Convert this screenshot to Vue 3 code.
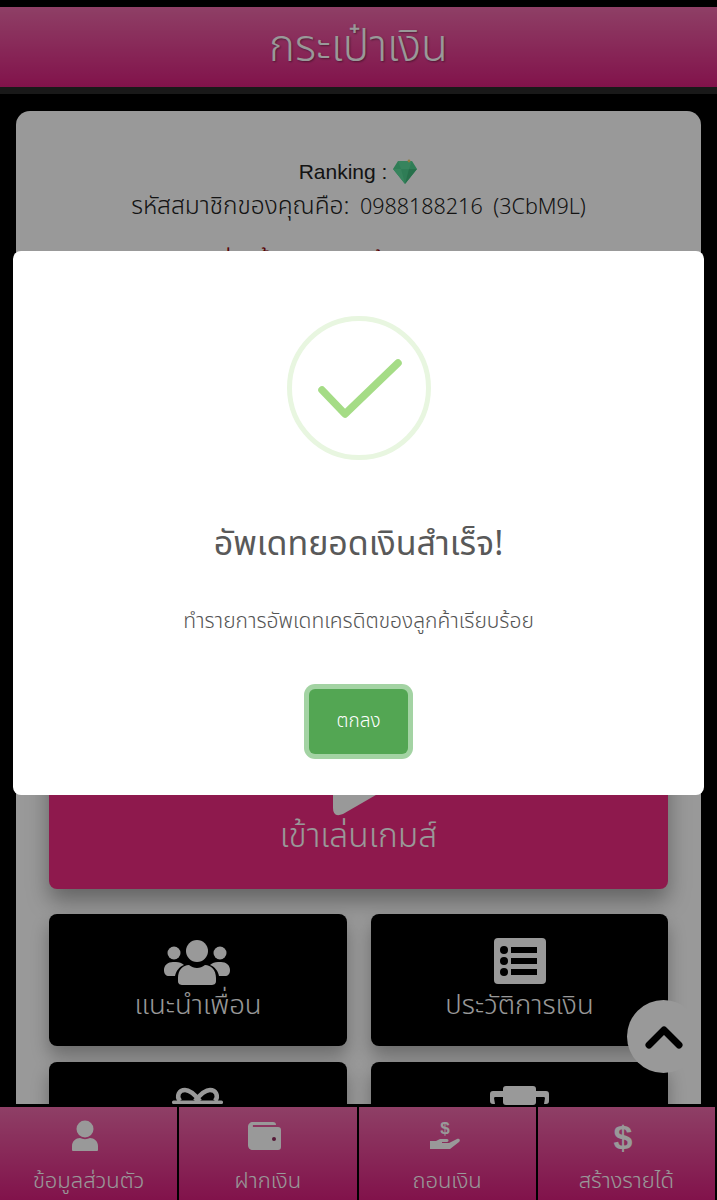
<template>
  <div class="page">
    <header class="top-bar">
      <h1 class="top-title">กระเป๋าเงิน</h1>
    </header>

    <main class="card">
      <div class="ranking">
        <span>Ranking :</span>
        <svg class="gem" viewBox="0 0 26 26">
          <path d="M6 2h14l5 8-12 15L1 10z" fill="#4fd08f" />
          <path d="M6 2h14l-3 8H9zM1 10h8l4 15z" fill="#5cdc9c" />
          <path d="M17 10h8L13 25z" fill="#42bb7e" />
          <circle cx="17" cy="2" r="1.400" fill="#f0cf6a" />
        </svg>
      </div>
      <p class="member">รหัสสมาชิกของคุณคือ: <span class="member-code">0988188216 (3CbM9L)</span></p>
      <p class="balance">ยอดเงินที่มีนี้ คือยอดทั้งหมดของคุณ</p>

      <button class="play-btn">
        <svg class="play-icon" viewBox="0 0 100 120">
          <path d="M5 12 100 66 10 118Q0 122 0 112V18Q0 10 5 12z" fill="#fff" />
        </svg>
        <span>เข้าเล่นเกมส์</span>
      </button>

      <div class="menu-grid">
        <div class="tile" v-for="tile in tiles" :key="tile.label">
          <svg class="tile-icon" viewBox="0 0 70 50" v-html="tile.icon"></svg>
          <span>{{ tile.label }}</span>
        </div>
      </div>
    </main>

    <button class="to-top">
      <svg viewBox="0 0 38 24" width="38" height="24">
        <path d="M4 20 19 5l15 15" fill="none" stroke="#000" stroke-width="7" stroke-linecap="round" stroke-linejoin="round" />
      </svg>
    </button>

    <nav class="bottom-nav">
      <a class="nav-item" v-for="item in navItems" :key="item.label">
        <svg class="nav-icon" viewBox="0 0 36 36" v-html="item.icon"></svg>
        <span>{{ item.label }}</span>
      </a>
    </nav>

    <div class="overlay">
      <div class="modal">
        <div class="success-ring">
          <svg viewBox="0 0 134 134" width="134" height="134">
            <path d="M30 69 53 93 106 42" fill="none" stroke="#a5dc86" stroke-width="7.500" stroke-linecap="round" stroke-linejoin="round" />
          </svg>
        </div>
        <h2 class="modal-title">อัพเดทยอดเงินสำเร็จ!</h2>
        <p class="modal-text">ทำรายการอัพเดทเครดิตของลูกค้าเรียบร้อย</p>
        <button class="ok-btn">ตกลง</button>
      </div>
    </div>
  </div>
</template>

<script setup>
const tiles = [
  {
    label: 'แนะนำเพื่อน',
    icon: '<circle cx="34" cy="13" r="11" fill="#fff"/><circle cx="11" cy="15" r="6.500" fill="#fff"/><circle cx="57" cy="15" r="6.500" fill="#fff"/><path d="M1 32c0-5 4-8 9-8h3c3 0 6 1 8 3-5 2-8 6-9 11H6c-3 0-5-2-5-6zM67 32c0-5-4-8-9-8h-3c-3 0-6 1-8 3 5 2 8 6 9 11h6c3 0 5-2 5-6z" fill="#fff"/><path d="M15 40c0-8 5-13 11-13 5 4 11 4 16 0 6 0 11 5 11 13v3c0 3-2 4-5 4H20c-3 0-5-1-5-4z" fill="#fff"/>'
  },
  {
    label: 'ประวัติการเงิน',
    icon: '<rect x="9" y="0" width="52" height="46" rx="4" fill="#fff"/><circle cx="19" cy="12" r="4" fill="#000"/><circle cx="19" cy="23" r="4" fill="#000"/><circle cx="19" cy="34" r="4" fill="#000"/><rect x="26" y="9" width="26" height="6" fill="#000"/><rect x="26" y="20" width="26" height="6" fill="#000"/><rect x="26" y="31" width="26" height="6" fill="#000"/>'
  },
  {
    label: 'รับโบนัส',
    icon: '<rect x="9" y="14.500" width="51" height="3.500" rx="1.500" fill="#fff"/><path d="M17 15C13 10 16 4 22 4c6 0 11 6 15 11M52 15c4-5 1-11-5-11-6 0-11 6-15 11" fill="none" stroke="#fff" stroke-width="4.500"/>'
  },
  {
    label: 'ถอนเงิน',
    icon: '<rect x="18" y="0" width="33" height="19" rx="3" fill="#fff"/><path d="M18 5H8C6 5 5 6 5 8v7c0 2 1 3 3 3h2l-1-6c0-1 1-1 2-1h7zM51 5h10c2 0 3 1 3 3v7c0 2-1 3-3 3h-2l1-6c0-1-1-1-2-1h-7z" fill="#fff"/>'
  }
]

const navItems = [
  {
    label: 'ข้อมูลส่วนตัว',
    icon: '<circle cx="18" cy="10" r="8.500" fill="#fff"/><path d="M5 31v-4c0-5 4-8 8-8 3 1.500 7 1.500 10 0 4 0 8 3 8 8v4c0 1-1 1-2 1H7c-1 0-2 0-2-1z" fill="#fff"/>'
  },
  {
    label: 'ฝากเงิน',
    icon: '<path d="M7 3h20c2 0 3 1 3 3H7.500c-1 0-1 2 0 2H32c2 0 3 1 3 3v17c0 2-1 3-3 3H7c-3 0-5-2-5-5V8c0-3 2-5 5-5z" fill="#fff"/><circle cx="28" cy="20" r="2" fill="#8e2a5c"/>'
  },
  {
    label: 'ถอนเงิน',
    icon: '<text x="19" y="15" font-size="17" font-weight="700" text-anchor="middle" font-family=\'Liberation Sans\' fill="#fff">$</text><path d="M4 22h6l4-2h7c2 0 2 3 0 3h-5v1h7l8-4c2-1 4 1 2 3l-9 7H4z" fill="#fff"/>'
  },
  {
    label: 'สร้างรายได้',
    icon: '<text x="18" y="30" font-size="34" font-weight="700" text-anchor="middle" font-family=\'Liberation Sans\' fill="#fff">$</text>'
  }
]
</script>

<style scoped>
.page {
  position: relative;
  height: 1200px;
  overflow: hidden;
  background: #000;
  font-family: "Noto Sans Thai", "Noto Sans", "DejaVu Sans", sans-serif;
  font-weight: 300;
}

.top-bar {
  margin-top: 7px;
  height: 80px;
  display: flex;
  align-items: center;
  justify-content: center;
  background: linear-gradient(#ee6aaa, #d81f7d);
  border-bottom: 7px solid #2b2b2b;
}

.top-title {
  margin: 0;
  font-size: 44px;
  font-weight: 300;
  color: #fff;
  text-shadow: 1px 1px 2px rgba(0, 0, 0, 0.4);
}

.card {
  margin: 17px 16px 0;
  padding: 44px 33px 0;
  height: 993px;
  box-sizing: border-box;
  background: #fff;
  border-radius: 14px 14px 0 0;
  text-align: center;
  color: #222;
}

.ranking {
  display: flex;
  align-items: center;
  justify-content: center;
  gap: 5px;
  height: 34px;
  font-family: "Liberation Sans", sans-serif;
  font-size: 21px;
  line-height: 34px;
}

.gem {
  width: 26px;
  height: 26px;
}

.member {
  margin: 0;
  height: 36px;
  font-size: 24.500px;
  line-height: 36px;
  white-space: nowrap;
}

.member-code {
  margin-left: 4px;
  font-size: 21.500px;
  word-spacing: 5px;
}

.balance {
  margin: 28px 0 0;
  padding-right: 50px;
  height: 30px;
  font-size: 30px;
  line-height: 30px;
  color: #900000;
  white-space: nowrap;
}

.play-btn {
  display: flex;
  flex-direction: column;
  align-items: center;
  justify-content: flex-end;
  width: 100%;
  height: 270px;
  margin-top: 336px;
  padding: 0 0 27px;
  border: none;
  border-radius: 8px;
  background: #ed2b80;
  color: #fff;
  font-family: inherit;
  font-weight: 300;
  font-size: 33.500px;
  box-shadow: 0 12px 22px rgba(0, 0, 0, 0.35);
}

.play-icon {
  width: 100px;
  height: 120px;
  margin: 0 0 -5px 49px;
}

.menu-grid {
  display: grid;
  grid-template-columns: 298px 297px;
  grid-auto-rows: 132px;
  column-gap: 24px;
  row-gap: 16px;
  margin-top: 25px;
}

.tile {
  display: flex;
  flex-direction: column;
  align-items: center;
  padding-top: 24px;
  box-sizing: border-box;
  background: #000;
  border-radius: 8px;
  color: #fff;
  font-size: 27.500px;
  line-height: 36px;
  box-shadow: 0 10px 18px rgba(0, 0, 0, 0.3);
}

.tile-icon {
  width: 70px;
  height: 50px;
  flex: none;
}

.to-top {
  position: absolute;
  left: 627px;
  top: 1000px;
  width: 73px;
  height: 73px;
  padding: 0;
  border: none;
  border-radius: 50%;
  background: #fff;
  display: flex;
  align-items: center;
  justify-content: center;
}

.bottom-nav {
  position: absolute;
  left: 0;
  top: 1107px;
  width: 715px;
  height: 93px;
  display: grid;
  grid-template-columns: repeat(4, 1fr);
  column-gap: 2px;
  background: #000;
}

.nav-item {
  display: flex;
  flex-direction: column;
  align-items: center;
  padding-top: 12px;
  box-sizing: border-box;
  background: linear-gradient(#ee6aaa, #d81f7d);
  color: #fff;
  font-size: 22px;
  line-height: 30px;
}

.nav-icon {
  width: 36px;
  height: 36px;
  margin: 0 7px 12px 0;
}

.overlay {
  position: absolute;
  inset: 0;
  padding: 251px 13px 0;
  background: rgba(0, 0, 0, 0.4);
}

.modal {
  display: flex;
  flex-direction: column;
  align-items: center;
  height: 544px;
  padding-top: 65px;
  box-sizing: border-box;
  background: #fff;
  border-radius: 8px;
}

.success-ring {
  width: 144px;
  height: 144px;
  box-sizing: border-box;
  border: 5px solid #e8f6e0;
  border-radius: 50%;
}

.modal-title {
  margin: 60px 0 0;
  height: 50px;
  font-size: 34px;
  font-weight: 400;
  line-height: 50px;
  color: #595959;
}

.modal-text {
  margin: 37px 0 0;
  height: 30px;
  font-size: 21px;
  font-weight: 300;
  line-height: 30px;
  color: #545454;
}

.ok-btn {
  width: 99px;
  height: 65px;
  margin-top: 52px;
  border: none;
  border-radius: 6px;
  background: #53a653;
  box-shadow: 0 0 0 5px #a3d3a3;
  color: #fff;
  font-family: inherit;
  font-weight: 300;
  font-size: 19px;
}
</style>
